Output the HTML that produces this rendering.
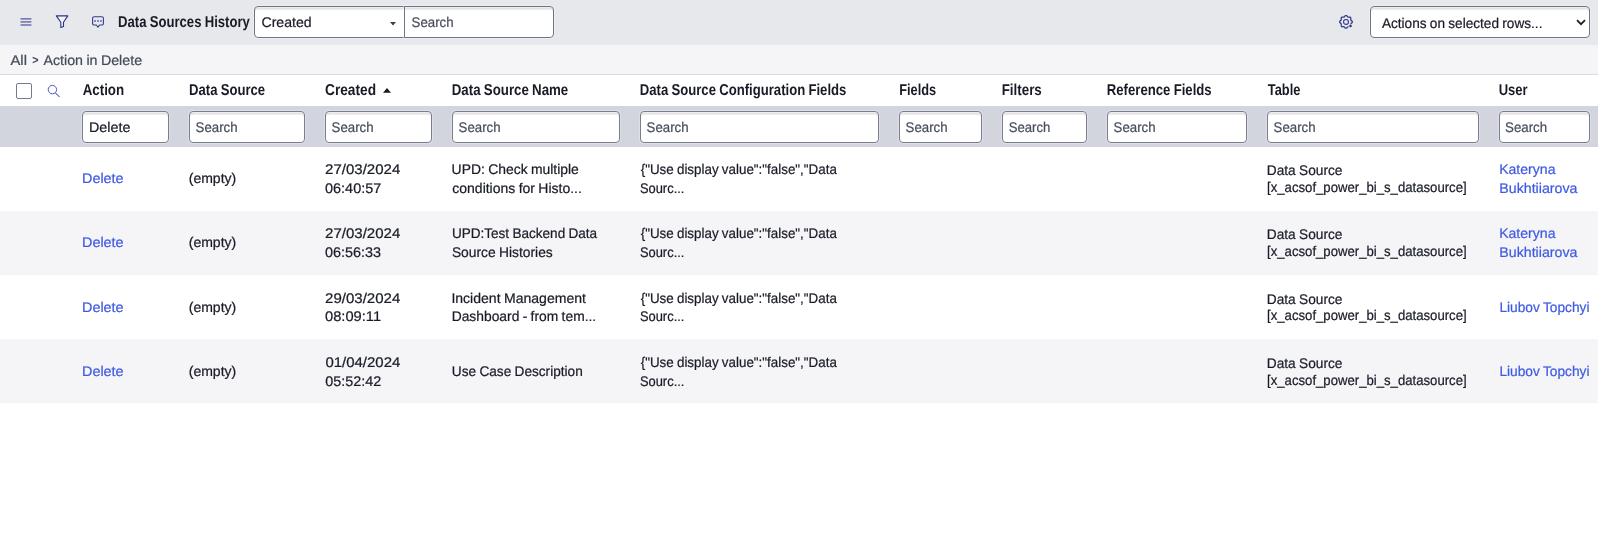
<!DOCTYPE html>
<html lang="en">
<head>
<meta charset="utf-8">
<title>Data Sources History</title>
<style>
*{box-sizing:border-box;margin:0;padding:0}
html,body{width:1598px;height:545px;overflow:hidden;background:#fff}
body{font-family:"Liberation Sans",sans-serif;font-size:14px;color:#181b26;position:relative}
.abs{position:absolute}
#toolbar{left:0;top:0;width:1598px;height:45px;background:#e6e8ec}
#crumb{left:0;top:45px;width:1598px;height:30px;background:#f5f5f7;border-bottom:1px solid #d9dbe3}
#hdr{left:0;top:75px;width:1598px;height:31px;background:#fff}
#srow{left:0;top:106px;width:1598px;height:41px;background:#d2d5de}
.row{left:0;width:1598px;height:64px}
.row.odd{background:#fff}
.row.even{background:#f5f5f7}
.t{position:absolute;white-space:nowrap;line-height:20px;font-size:14px;transform-origin:0 50%;text-decoration:none;color:#181b26;text-rendering:geometricPrecision;word-spacing:-0.5px;-webkit-text-stroke:0.22px currentColor}
.b{font-weight:bold;-webkit-text-stroke:0}
.inp{position:absolute;top:111px;height:32px;background:#fff;border:1px solid #787e8f;border-radius:4px;box-shadow:inset 0 1px 0 rgba(255,255,255,.35),inset 0 2px 0 rgba(0,0,0,.03),inset 0 3px 0 rgba(0,0,0,.075),0 0 0 1px rgba(255,255,255,.28)}
.box{position:absolute;background:#fff;border:1px solid #6e7589;box-shadow:inset 0 1px 0 rgba(255,255,255,.35),inset 0 2px 0 rgba(0,0,0,.03),inset 0 3px 0 rgba(0,0,0,.075),0 0 0 1px rgba(255,255,255,.28)}
#cb{position:absolute;left:16px;top:83px;width:16px;height:16px;border:1px solid #747b90;border-radius:2px;background:#fff}
svg{position:absolute;overflow:visible}
#tx{position:absolute;left:0;top:0;width:1598px;height:545px;will-change:transform}
</style>
</head>
<body>
<div id="toolbar" class="abs"></div>
<div id="crumb" class="abs"></div>
<div id="hdr" class="abs"></div>
<div id="srow" class="abs"></div>
<div class="abs row odd" style="top:147px"></div>
<div class="abs row even" style="top:211px"></div>
<div class="abs row odd" style="top:275px"></div>
<div class="abs row even" style="top:339px"></div>

<!-- toolbar controls -->
<div class="box" style="left:254px;top:6px;width:151px;height:32px;border-radius:4px 0 0 4px"></div>
<div class="box" style="left:404px;top:6px;width:150px;height:32px;border-radius:0 4px 4px 0"></div>
<div class="box" style="left:1370px;top:6px;width:220px;height:32px;border-radius:4px"></div>

<!-- hamburger -->
<svg style="left:0;top:0" width="120" height="45" viewBox="0 0 120 45"><path d="M20.5 18.9h10.9M20.5 21.95h10.9M20.5 25h10.9" stroke="#30348a" stroke-width="1" fill="none"/>
<!-- funnel -->
<path d="M56.3 15.9h11.5l-4.3 6.3v4.2l-2.7 1.2v-5.4z" stroke="#2e3283" stroke-width="1.1" fill="#f1f2f5" stroke-linejoin="round"/>
<!-- chat -->
<path d="M94.1 16.8h7.8a1.5 1.5 0 0 1 1.5 1.5v5.2a1.5 1.5 0 0 1 -1.5 1.5h-2.3l-1.6 2.2l-1.6-2.2h-2.3a1.5 1.5 0 0 1 -1.5 -1.5v-5.2a1.5 1.5 0 0 1 1.5 -1.5z" stroke="#363a90" stroke-width="1.1" fill="none" stroke-linejoin="round"/>
<path d="M94.4 20.3h1.4v1.4h-1.4zM97.3 20.3h1.4v1.4h-1.4zM100.2 20.3h1.4v1.4h-1.4z" fill="#363a90"/></svg>
<!-- select arrow (Created) -->
<svg style="left:390.4px;top:21.8px" width="6" height="3.4" viewBox="0 0 6 3.4"><path d="M0 0h6l-3 3.4z" fill="#3a3f4f"/></svg>
<!-- gear -->
<svg style="left:1339px;top:15px" width="14" height="14" viewBox="0 0 14 14"><path d="M9.1 11.7L8.8 11.8L8.5 12.0L8.2 12.5L7.9 13.0L7.4 13.2L7.0 13.2L6.6 13.2L6.1 13.0L5.8 12.5L5.5 12.0L5.2 11.8L4.9 11.7L4.5 11.6L4.0 11.6L3.4 11.8L2.9 11.7L2.6 11.5L2.3 11.1L2.1 10.7L2.2 10.2L2.3 9.6L2.3 9.2L2.1 8.9L2.0 8.5L1.7 8.2L1.1 7.9L0.8 7.6L0.7 7.1L0.7 6.7L0.8 6.2L1.1 5.9L1.7 5.6L2.0 5.3L2.1 4.9L2.3 4.6L2.3 4.2L2.2 3.6L2.1 3.1L2.3 2.7L2.6 2.3L2.9 2.1L3.4 2.0L4.0 2.2L4.5 2.2L4.9 2.1L5.2 2.0L5.5 1.8L5.8 1.3L6.1 0.8L6.6 0.6L7.0 0.6L7.4 0.6L7.9 0.8L8.2 1.3L8.5 1.8L8.8 2.0L9.1 2.1L9.5 2.2L10.0 2.2L10.6 2.0L11.1 2.1L11.4 2.3L11.7 2.7L11.9 3.1L11.8 3.6L11.7 4.2L11.7 4.6L11.9 4.9L12.0 5.3L12.3 5.6L12.9 5.9L13.2 6.2L13.3 6.7L13.3 7.1L13.2 7.6L12.9 7.9L12.3 8.2L12.0 8.5L11.9 8.9" stroke="#30348a" stroke-width="1.2" fill="none" stroke-linejoin="round" stroke-linecap="round"/><circle cx="7.0" cy="6.9" r="2.45" stroke="#30348a" stroke-width="1.1" fill="none"/><circle cx="11.5" cy="10.95" r="1.25" fill="#262a80"/></svg>
<!-- chevron (Actions select) -->
<svg style="left:1576px;top:19px" width="10" height="7" viewBox="0 0 10 7"><path d="M1 1.2l4 4 4-4" stroke="#181b26" stroke-width="1.7" fill="none"/></svg>

<!-- header -->
<div id="cb"></div>
<svg style="left:47px;top:84px" width="14" height="14" viewBox="0 0 14 14"><circle cx="5.4" cy="5.6" r="4.2" stroke="#4f57cc" stroke-width="1" fill="none"/><path d="M8.4 8.8l4.2 4.2" stroke="#4f57cc" stroke-width="1.05"/></svg>
<!-- sort arrow -->
<svg style="left:382.9px;top:87.8px" width="8" height="4.8" viewBox="0 0 8 4.8"><path d="M0 4.8h8L4 0z" fill="#181b26"/></svg>

<div class="inp" style="left:82px;width:87px"></div>
<div class="inp" style="left:189px;width:116px"></div>
<div class="inp" style="left:325px;width:107px"></div>
<div class="inp" style="left:452px;width:168px"></div>
<div class="inp" style="left:640px;width:239px"></div>
<div class="inp" style="left:899px;width:83px"></div>
<div class="inp" style="left:1002px;width:85px"></div>
<div class="inp" style="left:1107px;width:140px"></div>
<div class="inp" style="left:1267px;width:212px"></div>
<div class="inp" style="left:1499px;width:91px"></div>

<div id="tx">
<span class="t b" style="left:118px;top:13px;transform:translate(0.04px,0.00px) scaleX(0.8302);font-size:15.8px">Data Sources History</span>
<span class="t" style="left:261px;top:11px;transform:translate(0.49px,0.80px) scaleX(1.0069)">Created</span>
<span class="t" style="left:411px;top:11px;transform:translate(0.56px,0.80px) scaleX(0.9466);color:#474d5c">Search</span>
<span class="t" style="left:1381px;top:13px;transform:translate(0.88px,0.00px) scaleX(0.9728)">Actions on selected rows...</span>
<span class="t" style="left:10px;top:50px;transform:translate(0.51px,0.00px) scaleX(1.0561);color:#454b59">All</span>
<span class="t b" style="left:32px;top:50px;transform:translate(0.15px,0.30px) scaleX(0.8998);font-size:12px;color:#454b59">&gt;</span>
<span class="t" style="left:43px;top:50px;transform:translate(0.41px,0.00px) scaleX(1.0163);color:#454b59">Action in Delete</span>
<span class="t b" style="left:82px;top:81px;transform:translate(0.69px,0.00px) scaleX(0.8436);font-size:15.8px">Action</span>
<span class="t b" style="left:189px;top:81px;transform:translate(0.05px,0.00px) scaleX(0.8291);font-size:15.8px">Data Source</span>
<span class="t b" style="left:325px;top:81px;transform:translate(0.00px,0.00px) scaleX(0.8683);font-size:15.8px">Created</span>
<span class="t b" style="left:451px;top:81px;transform:translate(0.75px,0.00px) scaleX(0.8406);font-size:15.8px">Data Source Name</span>
<span class="t b" style="left:639px;top:81px;transform:translate(0.79px,0.00px) scaleX(0.8308);font-size:15.8px">Data Source Configuration Fields</span>
<span class="t b" style="left:899px;top:81px;transform:translate(0.14px,0.00px) scaleX(0.8105);font-size:15.8px">Fields</span>
<span class="t b" style="left:1001px;top:81px;transform:translate(0.64px,0.00px) scaleX(0.8473);font-size:15.8px">Filters</span>
<span class="t b" style="left:1106px;top:81px;transform:translate(0.78px,0.00px) scaleX(0.8331);font-size:15.8px">Reference Fields</span>
<span class="t b" style="left:1267px;top:81px;transform:translate(0.74px,0.00px) scaleX(0.8145);font-size:15.8px">Table</span>
<span class="t b" style="left:1498px;top:81px;transform:translate(0.71px,0.00px) scaleX(0.8249);font-size:15.8px">User</span>
<span class="t" style="left:89px;top:117px;transform:translate(0.02px,0.00px) scaleX(1.0216)">Delete</span>
<span class="t" style="left:195px;top:117px;transform:translate(0.56px,0.00px) scaleX(0.9466);color:#474d5c">Search</span>
<span class="t" style="left:331px;top:117px;transform:translate(0.56px,0.00px) scaleX(0.9466);color:#474d5c">Search</span>
<span class="t" style="left:458px;top:117px;transform:translate(0.56px,0.00px) scaleX(0.9466);color:#474d5c">Search</span>
<span class="t" style="left:646px;top:117px;transform:translate(0.56px,0.00px) scaleX(0.9466);color:#474d5c">Search</span>
<span class="t" style="left:905px;top:117px;transform:translate(0.56px,0.00px) scaleX(0.9466);color:#474d5c">Search</span>
<span class="t" style="left:1008px;top:117px;transform:translate(0.68px,0.00px) scaleX(0.9386);color:#474d5c">Search</span>
<span class="t" style="left:1113px;top:117px;transform:translate(0.56px,0.00px) scaleX(0.9466);color:#474d5c">Search</span>
<span class="t" style="left:1273px;top:117px;transform:translate(0.56px,0.00px) scaleX(0.9466);color:#474d5c">Search</span>
<span class="t" style="left:1505px;top:117px;transform:translate(0.02px,0.00px) scaleX(0.9498);color:#474d5c">Search</span>
<a class="t" style="left:82px;top:168px;transform:translate(0.00px,0.00px) scaleX(1.0286);color:#3f5ae0">Delete</a>
<span class="t" style="left:188px;top:168px;transform:translate(0.72px,0.00px) scaleX(1.0018)">(empty)</span>
<span class="t" style="left:325px;top:159px;transform:translate(0.11px,0.00px) scaleX(1.0729)">27/03/2024</span>
<span class="t" style="left:325px;top:178px;transform:translate(0.02px,0.00px) scaleX(1.0318)">06:40:57</span>
<span class="t" style="left:451px;top:159px;transform:translate(0.62px,0.00px) scaleX(0.9927)">UPD: Check multiple</span>
<span class="t" style="left:452px;top:178px;transform:translate(0.30px,0.00px) scaleX(0.9989)">conditions for Histo...</span>
<span class="t" style="left:640px;top:159px;transform:translate(0.67px,0.00px) scaleX(0.9563)">{&quot;Use display value&quot;:&quot;false&quot;,&quot;Data</span>
<span class="t" style="left:639px;top:178px;transform:translate(0.89px,0.00px) scaleX(0.9227)">Sourc...</span>
<span class="t" style="left:1266px;top:160px;transform:translate(0.78px,0.00px) scaleX(0.9788)">Data Source</span>
<span class="t" style="left:1267px;top:177px;transform:translate(0.07px,0.40px) scaleX(0.9394)">[x_acsof_power_bi_s_datasource]</span>
<a class="t" style="left:1499px;top:159px;transform:translate(0.13px,0.00px) scaleX(1.0053);color:#3f5ae0">Kateryna</a>
<a class="t" style="left:1499px;top:178px;transform:translate(0.25px,0.00px) scaleX(1.0156);color:#3f5ae0">Bukhtiiarova</a>
<a class="t" style="left:82px;top:232px;transform:translate(0.00px,0.00px) scaleX(1.0286);color:#3f5ae0">Delete</a>
<span class="t" style="left:188px;top:232px;transform:translate(0.72px,0.00px) scaleX(1.0018)">(empty)</span>
<span class="t" style="left:325px;top:223px;transform:translate(0.11px,0.00px) scaleX(1.0729)">27/03/2024</span>
<span class="t" style="left:325px;top:242px;transform:translate(0.03px,0.00px) scaleX(1.0295)">06:56:33</span>
<span class="t" style="left:451px;top:223px;transform:translate(0.88px,0.00px) scaleX(0.9685)">UPD:Test Backend Data</span>
<span class="t" style="left:451px;top:242px;transform:translate(0.89px,0.00px) scaleX(0.9869)">Source Histories</span>
<span class="t" style="left:640px;top:223px;transform:translate(0.67px,0.00px) scaleX(0.9563)">{&quot;Use display value&quot;:&quot;false&quot;,&quot;Data</span>
<span class="t" style="left:639px;top:242px;transform:translate(0.89px,0.00px) scaleX(0.9227)">Sourc...</span>
<span class="t" style="left:1266px;top:224px;transform:translate(0.78px,0.00px) scaleX(0.9788)">Data Source</span>
<span class="t" style="left:1267px;top:241px;transform:translate(0.07px,0.40px) scaleX(0.9394)">[x_acsof_power_bi_s_datasource]</span>
<a class="t" style="left:1499px;top:223px;transform:translate(0.13px,0.00px) scaleX(1.0053);color:#3f5ae0">Kateryna</a>
<a class="t" style="left:1499px;top:242px;transform:translate(0.25px,0.00px) scaleX(1.0156);color:#3f5ae0">Bukhtiiarova</a>
<a class="t" style="left:82px;top:297px;transform:translate(0.00px,0.00px) scaleX(1.0286);color:#3f5ae0">Delete</a>
<span class="t" style="left:188px;top:297px;transform:translate(0.72px,0.00px) scaleX(1.0018)">(empty)</span>
<span class="t" style="left:325px;top:288px;transform:translate(0.11px,0.00px) scaleX(1.0729)">29/03/2024</span>
<span class="t" style="left:324px;top:306px;transform:translate(0.99px,0.00px) scaleX(1.0486)">08:09:11</span>
<span class="t" style="left:451px;top:288px;transform:translate(0.38px,0.00px) scaleX(1.0032)">Incident Management</span>
<span class="t" style="left:451px;top:306px;transform:translate(0.70px,0.00px) scaleX(0.9873)">Dashboard - from tem...</span>
<span class="t" style="left:640px;top:288px;transform:translate(0.67px,0.00px) scaleX(0.9563)">{&quot;Use display value&quot;:&quot;false&quot;,&quot;Data</span>
<span class="t" style="left:639px;top:306px;transform:translate(0.89px,0.00px) scaleX(0.9227)">Sourc...</span>
<span class="t" style="left:1266px;top:289px;transform:translate(0.78px,0.00px) scaleX(0.9788)">Data Source</span>
<span class="t" style="left:1267px;top:305px;transform:translate(0.07px,0.40px) scaleX(0.9394)">[x_acsof_power_bi_s_datasource]</span>
<a class="t" style="left:1499px;top:297px;transform:translate(0.38px,0.00px) scaleX(0.9808);color:#3f5ae0">Liubov Topchyi</a>
<a class="t" style="left:82px;top:361px;transform:translate(0.00px,0.00px) scaleX(1.0286);color:#3f5ae0">Delete</a>
<span class="t" style="left:188px;top:361px;transform:translate(0.72px,0.00px) scaleX(1.0018)">(empty)</span>
<span class="t" style="left:325px;top:352px;transform:translate(0.38px,0.00px) scaleX(1.0697)">01/04/2024</span>
<span class="t" style="left:325px;top:371px;transform:translate(0.21px,0.00px) scaleX(1.0276)">05:52:42</span>
<span class="t" style="left:451px;top:361px;transform:translate(0.87px,0.00px) scaleX(0.9740)">Use Case Description</span>
<span class="t" style="left:640px;top:352px;transform:translate(0.67px,0.00px) scaleX(0.9563)">{&quot;Use display value&quot;:&quot;false&quot;,&quot;Data</span>
<span class="t" style="left:639px;top:371px;transform:translate(0.89px,0.00px) scaleX(0.9227)">Sourc...</span>
<span class="t" style="left:1266px;top:353px;transform:translate(0.78px,0.00px) scaleX(0.9788)">Data Source</span>
<span class="t" style="left:1267px;top:370px;transform:translate(0.07px,0.40px) scaleX(0.9394)">[x_acsof_power_bi_s_datasource]</span>
<a class="t" style="left:1499px;top:361px;transform:translate(0.38px,0.00px) scaleX(0.9808);color:#3f5ae0">Liubov Topchyi</a>
</div>
</body>
</html>
